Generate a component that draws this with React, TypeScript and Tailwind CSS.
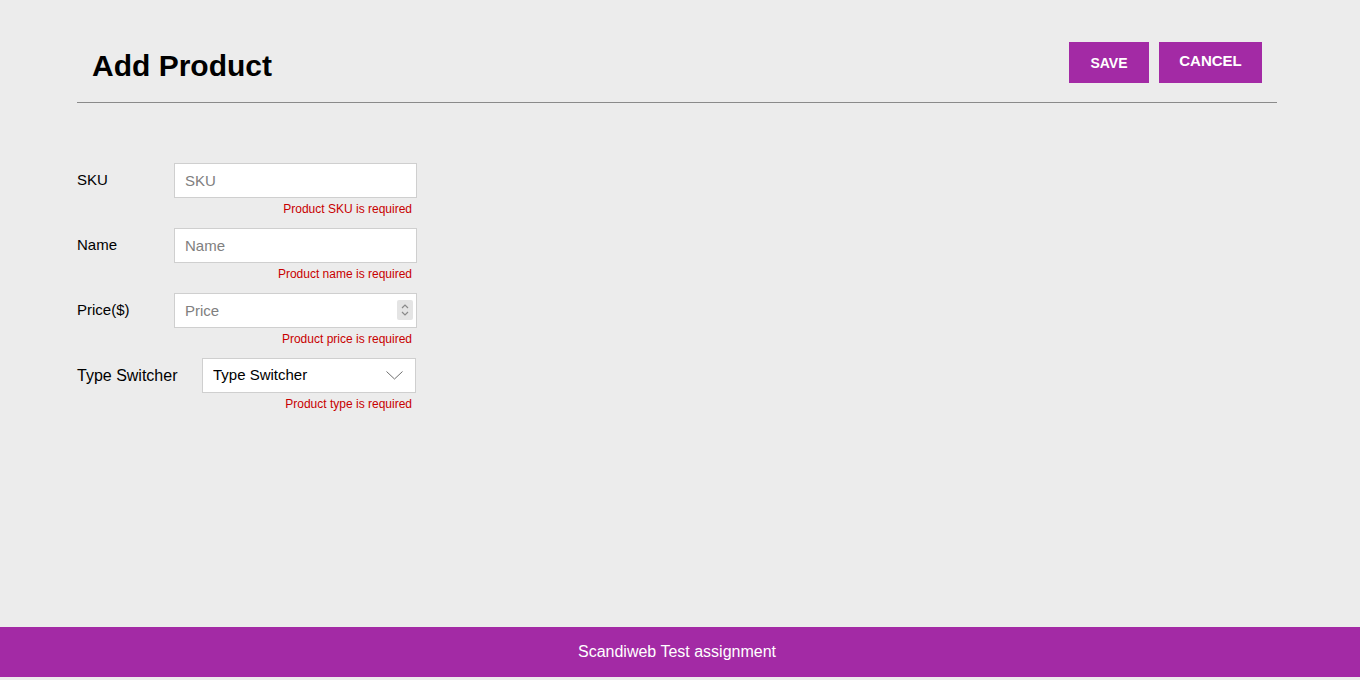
import { useState } from "react";

type Field = {
  id: string;
  label: string;
  placeholder: string;
  error: string;
  number?: boolean;
};

const fields: Field[] = [
  { id: "sku", label: "SKU", placeholder: "SKU", error: "Product SKU is required" },
  { id: "name", label: "Name", placeholder: "Name", error: "Product name is required" },
  { id: "price", label: "Price($)", placeholder: "Price", error: "Product price is required", number: true },
];

const Spinner = () => (
  <span className="pointer-events-none absolute right-[4px] top-[7px] flex h-[20px] w-[16px] items-center justify-center rounded-[2px] bg-[#e4e4e4]">
    <svg width="8" height="14" viewBox="0 0 8 14" fill="none" stroke="#8a8a8a" strokeWidth="1.2">
      <path d="M1 5 L4 2 L7 5" />
      <path d="M1 9 L4 12 L7 9" />
    </svg>
  </span>
);

const App = () => {
  const [type, setType] = useState("");

  return (
    <div className="flex min-h-[680px] flex-col bg-[#ececec] font-['Liberation_Sans',Arial,sans-serif] text-black">
      <main className="flex-1">
        {/* Header */}
        <header className="ml-[77px] w-[1200px] border-b border-[#8a8a8a] px-[15px] pt-[42px] pb-[19px]">
          <div className="flex items-start justify-between">
            <h1 className="mt-[9px] text-[30px] font-bold leading-[30px]">Add Product</h1>
            <div className="flex gap-[10px]">
              <button
                type="button"
                className="flex h-[41px] w-[80px] items-center justify-center bg-[#a32aa5] pt-[2px] text-[14px] font-bold text-white"
              >
                SAVE
              </button>
              <button
                type="button"
                className="flex h-[41px] w-[103px] items-center justify-center bg-[#a32aa5] pb-[2px] text-[15px] font-bold text-white"
              >
                CANCEL
              </button>
            </div>
          </div>
        </header>

        {/* Form */}
        <form className="ml-[77px] mt-[60px] w-[340px]">
          {fields.map((f) => (
            <div key={f.id} className="mb-[12px]">
              <div className="flex items-center">
                <label htmlFor={f.id} className="w-[97px] text-[15px]">
                  {f.label}
                </label>
                <div className="relative">
                  <input
                    id={f.id}
                    placeholder={f.placeholder}
                    className="h-[35px] w-[243px] border border-[#cfcfcf] bg-white px-[10px] text-[15px] outline-none placeholder:text-[#808080]"
                  />
                  {f.number && <Spinner />}
                </div>
              </div>
              <p className="mt-[4px] pr-[5px] text-right text-[12px] leading-[14px] text-[#c80000]">{f.error}</p>
            </div>
          ))}

          <div>
            <div className="flex items-center">
              <label htmlFor="productType" className="w-[125px] text-[16px]">
                Type Switcher
              </label>
              <div className="relative">
                <select
                  id="productType"
                  value={type}
                  onChange={(e) => setType(e.target.value)}
                  className="h-[35px] w-[214px] appearance-none border border-[#cfcfcf] bg-white px-[10px] text-[15px] text-black outline-none"
                >
                  <option value="">Type Switcher</option>
                  <option value="dvd">DVD</option>
                  <option value="book">Book</option>
                  <option value="furniture">Furniture</option>
                </select>
                <svg
                  className="pointer-events-none absolute right-[13px] top-[13px]"
                  width="17"
                  height="9"
                  viewBox="0 0 17 9"
                  fill="none"
                  stroke="#6f6f6f"
                  strokeWidth="1"
                >
                  <path d="M0.5 0.5 L8.5 8 L16.5 0.5" />
                </svg>
              </div>
            </div>
            <p className="mt-[4px] pr-[5px] text-right text-[12px] leading-[14px] text-[#c80000]">
              Product type is required
            </p>
          </div>
        </form>
      </main>

      {/* Footer */}
      <footer className="mb-[3px] flex h-[50px] items-center justify-center bg-[#a32aa5] pr-[6px] text-[16px] text-white">
        Scandiweb Test assignment
      </footer>
    </div>
  );
};

export default App;
